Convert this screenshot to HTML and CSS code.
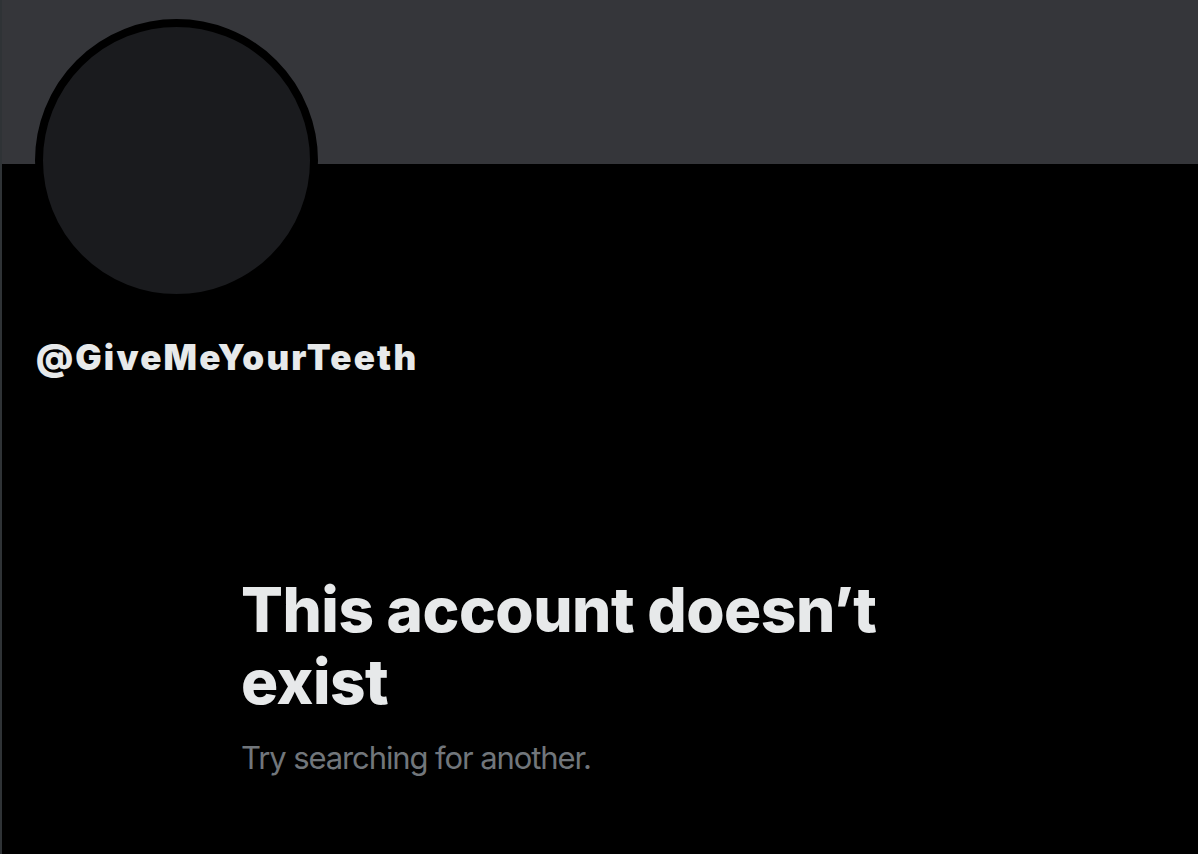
FILE: index.html
```html
<!DOCTYPE html>
<html lang="en">
<head>
<meta charset="utf-8">
<title>Profile</title>
<link rel="stylesheet" href="styles.css">
</head>
<body>
<main class="page">
  <div class="banner"></div>
  <section class="profile">
    <div class="avatar"></div>
    <div class="handle">@GiveMeYourTeeth</div>
  </section>
  <section class="empty">
    <h1 class="empty-title">This account doesn’t exist</h1>
    <p class="empty-sub">Try searching for another.</p>
  </section>
</main>
</body>
</html>
```

FILE: styles.css
```css
html, body {
  margin: 0;
  padding: 0;
  background: #000;
}
body {
  font-family: Inter, "Liberation Sans", sans-serif;
  color: #e7e9ea;
}
.page {
  height: 854px;
  border-left: 2px solid #2f3336;
  box-sizing: border-box;
  overflow: hidden;
}
.banner {
  height: 164px;
  background: #35363a;
}
.profile {
  padding: 0 0 0 33px;
}
.avatar {
  width: 267px;
  height: 267px;
  border: 8px solid #000;
  border-radius: 50%;
  background: #1a1b1e;
  margin-top: -145px;
}
.handle {
  margin-top: 35px;
  font-size: 35px;
  line-height: 40px;
  font-weight: 900;
  letter-spacing: 2.2px;
  padding-left: 1px;
}
.empty {
  padding: 0 0 0 239px;
  margin-top: 197px;
  width: 680px;
}
.empty-title {
  margin: 0;
  font-size: 62px;
  line-height: 72px;
  font-weight: 800;
  letter-spacing: -0.5px;
}
.empty-sub {
  margin: 20px 0 0;
  font-size: 31px;
  line-height: 40px;
  color: #71767b;
  font-weight: 400;
  letter-spacing: -1.1px;
}
```
